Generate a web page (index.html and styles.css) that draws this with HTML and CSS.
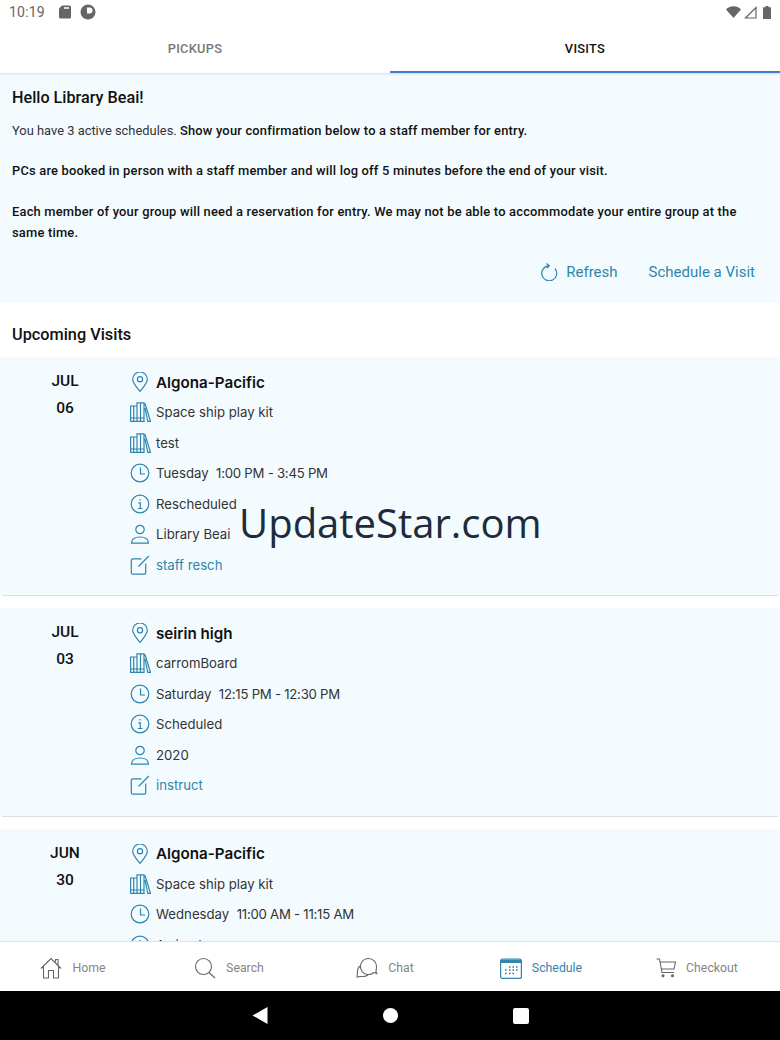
FILE: index.html
```html
<!DOCTYPE html>
<html lang="en">
<head>
    <meta charset="UTF-8">
    <title>Visits</title>
    <link rel="stylesheet" href="styles.css">
</head>
<body>
    <svg class="sprites" width="0" height="0">
        <symbol id="i-pin" viewBox="0 0 20 20"><path d="M10 19.500C6 14.500 2.700 11 2.700 7.300a7.300 7.300 0 0 1 14.600 0c0 3.700-3.300 7.200-7.300 12.200z"/><circle cx="10" cy="7.300" r="2.600"/></symbol>
        <symbol id="i-books" viewBox="0 0 21 20"><path d="M.6 4H7V19.400H.6zM3.700 4V19.400M.6 16H7M7 .8H14V19.400H7zM10.500 .8V19.400M7 16H14M15 1.500L20.500 19.400H17.800L15 6"/></symbol>
        <symbol id="i-clock" viewBox="0 0 20 20"><circle cx="10" cy="10" r="8.800"/><path d="M10.500 4.500V11H15"/></symbol>
        <symbol id="i-info" viewBox="0 0 20 20"><circle cx="10" cy="10" r="8.800"/><path d="M8.300 8.800H10.300V14.500M8 14.500H12.500M10 5v1.400"/></symbol>
        <symbol id="i-user" viewBox="0 0 20 20"><circle cx="10" cy="5.500" r="4.200"/><path d="M1.500 19.200c0-4.500 3.500-6.200 8.500-6.200s8.500 1.700 8.500 6.200z"/></symbol>
        <symbol id="i-note" viewBox="0 0 20 20"><path d="M11.500 3.800H2.800a1.500 1.500 0 0 0-1.500 1.500v12.400a1.500 1.500 0 0 0 1.500 1.500h11.400a1.500 1.500 0 0 0 1.500-1.500V8.500M8.500 11.500L18.800 1"/></symbol>
    </svg>

    <div class="app">
        <div class="status-bar">
            <div class="status-left">
                <span class="time">10:19</span>
                <svg class="st-icon" width="12" height="14" viewBox="0 0 12 14"><path d="M3 .5h7.500a1.500 1.500 0 0 1 1.500 1.500v10a1.500 1.500 0 0 1-1.500 1.500h-9A1.500 1.500 0 0 1 0 12V3.500z" fill="#666"/><rect x="5" y="2" width="5" height="2" fill="#ddd"/></svg>
                <svg class="st-icon" width="16" height="16" viewBox="0 0 16 16"><circle cx="8" cy="8" r="7.500" fill="#666"/><path d="M7 3.500h2.500a3 3 0 0 1 0 6H7z" fill="#fff"/></svg>
            </div>
            <div class="status-right">
                <svg width="15" height="12" viewBox="0 0 15 12"><path d="M0 3.500C4 -.8 11 -.8 15 3.500L7.500 12z" fill="#666"/></svg>
                <svg width="13" height="13" viewBox="0 0 13 13"><path d="M12 1.500V12H1.500z" fill="none" stroke="#666" stroke-width="1.200"/></svg>
                <svg class="battery" width="8" height="13" viewBox="0 0 8 13"><path d="M2.500 0h3v1.200H8V13H0V1.200h2.500z" fill="#666"/></svg>
            </div>
        </div>

        <div class="tabs">
            <div class="tab">PICKUPS</div>
            <div class="tab active">VISITS</div>
        </div>

        <div class="content">
            <section class="intro">
                <h1>Hello Library Beai!</h1>
                <p>You have 3 active schedules. <b>Show your confirmation below to a staff member for entry.</b></p>
                <p><b>PCs are booked in person with a staff member and will log off 5 minutes before the end of your visit.</b></p>
                <p><b>Each member of your group will need a reservation for entry. We may not be able to accommodate your entire group at the same time.</b></p>
                <div class="actions">
                    <a class="action">
                        <svg class="line" width="18" height="18" viewBox="0 0 18 18"><path d="M15 5.500A7.500 7.500 0 1 1 9 2.800M6.500 .5L9.300 2.800 6.800 5.300"/></svg>
                        Refresh
                    </a>
                    <a class="action">Schedule a Visit</a>
                </div>
            </section>

            <h2 class="section-title">Upcoming Visits</h2>

            <article class="visit">
                <div class="date"><span>JUL</span><span>06</span></div>
                <div class="rows">
                    <div class="row title"><svg class="line"><use href="#i-pin"/></svg>Algona-Pacific</div>
                    <div class="row"><svg class="line wide"><use href="#i-books"/></svg>Space ship play kit</div>
                    <div class="row"><svg class="line wide"><use href="#i-books"/></svg>test</div>
                    <div class="row"><svg class="line"><use href="#i-clock"/></svg>Tuesday&nbsp; <span class="hours">1:00 PM - 3:45 PM</span></div>
                    <div class="row"><svg class="line"><use href="#i-info"/></svg>Rescheduled</div>
                    <div class="row"><svg class="line"><use href="#i-user"/></svg>Library Beai</div>
                    <div class="row note"><svg class="line"><use href="#i-note"/></svg>staff resch</div>
                </div>
            </article>
            <hr class="divider">

            <article class="visit">
                <div class="date"><span>JUL</span><span>03</span></div>
                <div class="rows">
                    <div class="row title"><svg class="line"><use href="#i-pin"/></svg>seirin high</div>
                    <div class="row"><svg class="line wide"><use href="#i-books"/></svg>carromBoard</div>
                    <div class="row"><svg class="line"><use href="#i-clock"/></svg>Saturday&nbsp; <span class="hours">12:15 PM - 12:30 PM</span></div>
                    <div class="row"><svg class="line"><use href="#i-info"/></svg>Scheduled</div>
                    <div class="row"><svg class="line"><use href="#i-user"/></svg>2020</div>
                    <div class="row note"><svg class="line"><use href="#i-note"/></svg>instruct</div>
                </div>
            </article>
            <hr class="divider">

            <article class="visit">
                <div class="date"><span>JUN</span><span>30</span></div>
                <div class="rows">
                    <div class="row title"><svg class="line"><use href="#i-pin"/></svg>Algona-Pacific</div>
                    <div class="row"><svg class="line wide"><use href="#i-books"/></svg>Space ship play kit</div>
                    <div class="row"><svg class="line"><use href="#i-clock"/></svg>Wednesday&nbsp; <span class="hours">11:00 AM - 11:15 AM</span></div>
                    <div class="row"><svg class="line"><use href="#i-info"/></svg>Arrived</div>
                </div>
            </article>
        </div>

        <nav class="bottom-nav">
            <a class="nav-item">
                <svg class="nav-icon" width="22" height="22" viewBox="0 0 22 22"><path d="M1 11.500L11 1.500l10 10M3.500 9.500V21H8.500V13.500H13.500V21H18.500V9.500M15.500 5V2.500H18V8"/></svg>
                Home
            </a>
            <a class="nav-item">
                <svg class="nav-icon" width="22" height="22" viewBox="0 0 22 22"><circle cx="9.500" cy="9.500" r="8"/><path d="M15 15.500L21 21"/></svg>
                Search
            </a>
            <a class="nav-item">
                <svg class="nav-icon" width="22" height="22" viewBox="0 0 22 22"><path d="M12.500 1.500a8 8 0 0 1 8 8c0 2-.5 3.500-.5 5.500l.8 1.500-3-1a8 8 0 1 1-5.300-14zM5 8.500c-2 1-3.500 3.500-3.500 6l-.5 5.500 3-.5h3c2 0 3.500-.5 5-1.500"/></svg>
                Chat
            </a>
            <a class="nav-item current">
                <svg width="22" height="21" viewBox="0 0 22 21"><rect x=".6" y="1" width="20.800" height="19.400" rx="2" fill="none" stroke="#2f86ac" stroke-width="1.200"/><path d="M1 1.500h20V5H1z" fill="#2f86ac"/><path d="M9 9h1.500M12.500 9H14M16 9h1.500M5 12h1.500M9 12h1.500M12.500 12H14M16 12h1.500M5 15.500h1.500M9 15.500h1.500M12.500 15.500H14" stroke="#2f6f94" stroke-width="1.500"/></svg>
                Schedule
            </a>
            <a class="nav-item">
                <svg class="nav-icon" width="20" height="20" viewBox="0 0 20 20"><path d="M.5 1H3.500L6 14.500H18M4 4H19.500L18 11H5.300"/><circle cx="7" cy="17.800" r="1" fill="#666"/><circle cx="16.500" cy="17.800" r="1" fill="#666"/></svg>
                Checkout
            </a>
        </nav>

        <div class="system-nav">
            <svg width="16" height="17" viewBox="0 0 16 17"><path d="M15.500 0V17L.5 8.500z" fill="#fff"/></svg>
            <span class="sys-circle"></span>
            <span class="sys-square"></span>
        </div>

        <div class="watermark">UpdateStar.com</div>
    </div>
</body>
</html>
```

FILE: styles.css
```css
body {
    margin: 0;
    font-family: Roboto, "Liberation Sans", sans-serif;
    color: #1c1c1c;
    background-color: #fff;
}
.sprites {
    position: absolute;
}
.app {
    position: relative;
    display: flex;
    flex-direction: column;
    height: 1040px;
    overflow: hidden;
}

/* status bar */
.status-bar {
    display: flex;
    justify-content: space-between;
    align-items: center;
    height: 24px;
    padding: 0 9px;
    flex-shrink: 0;
}
.status-left {
    display: flex;
    align-items: center;
    gap: 9px;
}
.time {
    font-size: 14px;
    color: #666;
    letter-spacing: 0.2px;
    margin-right: 5px;
}
.status-right {
    display: flex;
    align-items: center;
    gap: 3px;
}
.battery {
    margin-left: 3px;
}

/* tabs */
.tabs {
    display: flex;
    height: 49px;
    flex-shrink: 0;
    box-shadow: 0 1px 2px rgba(0, 0, 0, 0.12);
    position: relative;
}
.tab {
    flex: 1;
    display: flex;
    align-items: center;
    justify-content: center;
    font-size: 12.800px;
    font-weight: 500;
    color: #777;
    letter-spacing: 0.3px;
    box-sizing: border-box;
}
.tab.active {
    color: #111;
    border-bottom: 2px solid #3d7fd0;
    padding-top: 2px;
}

/* main content */
.content {
    flex: 1;
    min-height: 0;
    overflow: hidden;
}
.intro {
    background-color: #f3fbff;
    padding: 15px 12px 0;
    height: 230px;
    box-sizing: border-box;
}
.intro h1 {
    margin: 0 0 13.500px;
    font-size: 16.200px;
    font-weight: 500;
    line-height: 19px;
    color: #111;
}
.intro p {
    margin: 0 0 20.400px;
    font-size: 12.900px;
    line-height: 20.400px;
    color: #333;
}
.intro b {
    font-weight: 500;
    color: #111;
    letter-spacing: 0.2px;
}
.actions {
    display: flex;
    justify-content: flex-end;
    gap: 31px;
    padding-right: 13px;
}
.action {
    display: flex;
    align-items: center;
    gap: 8px;
    font-size: 15px;
    color: #2f86ac;
}
.line {
    fill: none;
    stroke: #2f86ac;
    stroke-width: 1.200;
    flex-shrink: 0;
}
.section-title {
    margin: 0;
    height: 54px;
    padding: 22px 12px 0;
    box-sizing: border-box;
    font-size: 16.300px;
    font-weight: 500;
    line-height: 19px;
    color: #111;
}

/* visit cards */
.visit {
    display: flex;
    background-color: #f3fbff;
    padding: 10px 0 15px;
}
.date {
    width: 130px;
    display: flex;
    flex-direction: column;
    align-items: center;
    padding-top: 1px;
    font-size: 15.500px;
    font-weight: 500;
    line-height: 27px;
    color: #111;
    flex-shrink: 0;
}
.date span {
    display: block;
}
.rows {
    display: flex;
    flex-direction: column;
}
.row {
    display: flex;
    align-items: center;
    height: 30.500px;
    white-space: pre;
    font-family: Inter, Roboto, sans-serif;
    font-size: 13.200px;
    color: #333;
}
.row .line {
    width: 20px;
    height: 20px;
    margin-right: 6px;
}
.row .line.wide {
    width: 21px;
    margin-right: 5px;
}
.row.title {
    height: 30px;
    font-size: 15.200px;
    font-weight: 600;
    color: #111;
}
.row.note {
    color: #2f86ac;
}
.hours {
    letter-spacing: -0.25px;
}
.divider {
    margin: 0 2px;
    height: 13px;
    box-sizing: border-box;
    border: none;
    border-top: 1px solid #dcdfe0;
    background-color: #fff;
}

/* bottom navigation */
.bottom-nav {
    display: flex;
    height: 50px;
    flex-shrink: 0;
    background-color: #fff;
    border-top: 1px solid #dfe3e5;
    padding-top: 3px;
    box-sizing: border-box;
}
.nav-item {
    flex: 1;
    display: flex;
    align-items: center;
    justify-content: center;
    gap: 10px;
    padding-right: 10px;
    font-size: 12.300px;
    color: #858585;
}
.nav-item.current {
    color: #2f86ac;
}
.nav-icon {
    fill: none;
    stroke: #666;
    stroke-width: 1.100;
}

/* android buttons */
.system-nav {
    display: flex;
    align-items: center;
    justify-content: center;
    gap: 115px;
    height: 49px;
    flex-shrink: 0;
    background-color: #000;
}
.sys-circle {
    width: 15px;
    height: 15px;
    border-radius: 50%;
    background-color: #fff;
}
.sys-square {
    width: 16px;
    height: 16px;
    border-radius: 2px;
    background-color: #fff;
}

.watermark {
    position: absolute;
    left: 239px;
    top: 494px;
    font-family: "Open Sans", sans-serif;
    font-size: 40px;
    line-height: 57px;
    color: #1e2b3a;
}
```
